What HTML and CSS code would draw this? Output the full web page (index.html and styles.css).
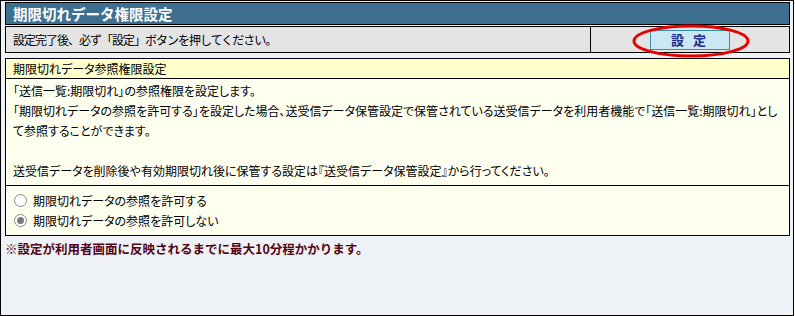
FILE: index.html
```html
<!DOCTYPE html>
<html lang="ja">

<head>
    <meta charset="UTF-8">
    <meta name="viewport" content="width=device-width, initial-scale=1.0">
    <title>期限切れデータ権限設定</title>
    <link rel="stylesheet" href="styles.css">
</head>

<body>
    <div class="frame">
        <div class="title">期限切れデータ権限設定</div>
        <div class="action">
            <div class="action-text">設定完了後、必ず「設定」ボタンを押してください。</div>
            <div class="action-btn">
                <button class="btn" type="button">設 定</button>
                <svg class="mark" width="120" height="36" viewBox="0 0 120 36">
                    <ellipse cx="60" cy="18" rx="57" ry="15" fill="none" stroke="#e60000" stroke-width="3"/>
                </svg>
            </div>
        </div>
        <div class="section">
            <div class="section-head">期限切れデータ参照権限設定</div>
            <div class="section-body">
                「送信一覧:期限切れ」の参照権限を設定します。<br>
                「期限切れデータの参照を許可する」を設定した場合、送受信データ保管設定で保管されている送受信データを利用者機能で「送信一覧:期限切れ」とし<br>
                て参照することができます。<br>
                <br>
                送受信データを削除後や有効期限切れ後に保管する設定は『送受信データ保管設定』から行ってください。
            </div>
            <div class="options">
                <label class="option"><span class="radio"></span>期限切れデータの参照を許可する</label>
                <label class="option"><span class="radio checked"></span>期限切れデータの参照を許可しない</label>
            </div>
        </div>
        <div class="note">※設定が利用者画面に反映されるまでに最大10分程かかります。</div>
    </div>
</body>

</html>
```

FILE: styles.css
```css
* {
    margin: 0;
    padding: 0;
    box-sizing: border-box;
    font-family: "Noto Sans CJK JP", "Noto Sans", sans-serif;
    font-feature-settings: "palt";
}

body {
    width: 795px;
    height: 316px;
    background: #fff;
    font-size: 12px;
    color: #000;
}

.frame {
    width: 794px;
    height: 316px;
    border: 1px solid #000;
    background: #eef2f7;
    padding: 1px 3px 0 4px;
}

.title {
    height: 23px;
    border: 1px solid #000;
    background: #3d7090;
    color: #fff;
    font-size: 14.5px;
    font-weight: bold;
    font-feature-settings: normal;
    line-height: 21px;
    padding-left: 7px;
}

.action {
    display: flex;
    height: 27px;
    margin-top: 1px;
    border: 1px solid #000;
    background: #e4e4e4;
}

.action-text {
    flex: 1;
    padding-left: 7px;
    line-height: 25px;
    font-feature-settings: normal;
    letter-spacing: -1px;
    border-right: 1px solid #000;
}

.action-btn {
    position: relative;
    width: 198px;
    display: flex;
    align-items: center;
    justify-content: center;
}

.btn {
    width: 80px;
    height: 20px;
    border: 1px solid #3590a6;
    background: #c9e8f2;
    color: #1c2d8e;
    font-size: 13px;
    font-weight: bold;
    letter-spacing: 3px;
    line-height: 18px;
}

.mark {
    position: absolute;
    left: 40px;
    top: -4px;
    pointer-events: none;
}

.section {
    margin-top: 5px;
    border: 1px solid #000;
    background: #fffff0;
}

.section-head {
    height: 20px;
    background: #ffffcc;
    border-bottom: 1px solid #000;
    line-height: 19px;
    padding-left: 7px;
}

.section-body {
    padding: 2px 0 4px 7px;
    line-height: 20px;
    white-space: nowrap;
    border-bottom: 1px solid #000;
}

.options {
    padding: 4px 0 5px 8px;
}

.option {
    display: flex;
    align-items: center;
    height: 20px;
}

.radio {
    width: 13px;
    height: 13px;
    border: 1px solid #8a8a8a;
    border-radius: 50%;
    background: #fff;
    margin-right: 6px;
    display: flex;
    align-items: center;
    justify-content: center;
}

.radio.checked::after {
    content: "";
    width: 7px;
    height: 7px;
    border-radius: 50%;
    background: #7a7a7a;
}

.note {
    margin-top: 4px;
    font-size: 12.5px;
    font-weight: bold;
    font-feature-settings: normal;
    color: #520414;
    line-height: 18px;
}
```
